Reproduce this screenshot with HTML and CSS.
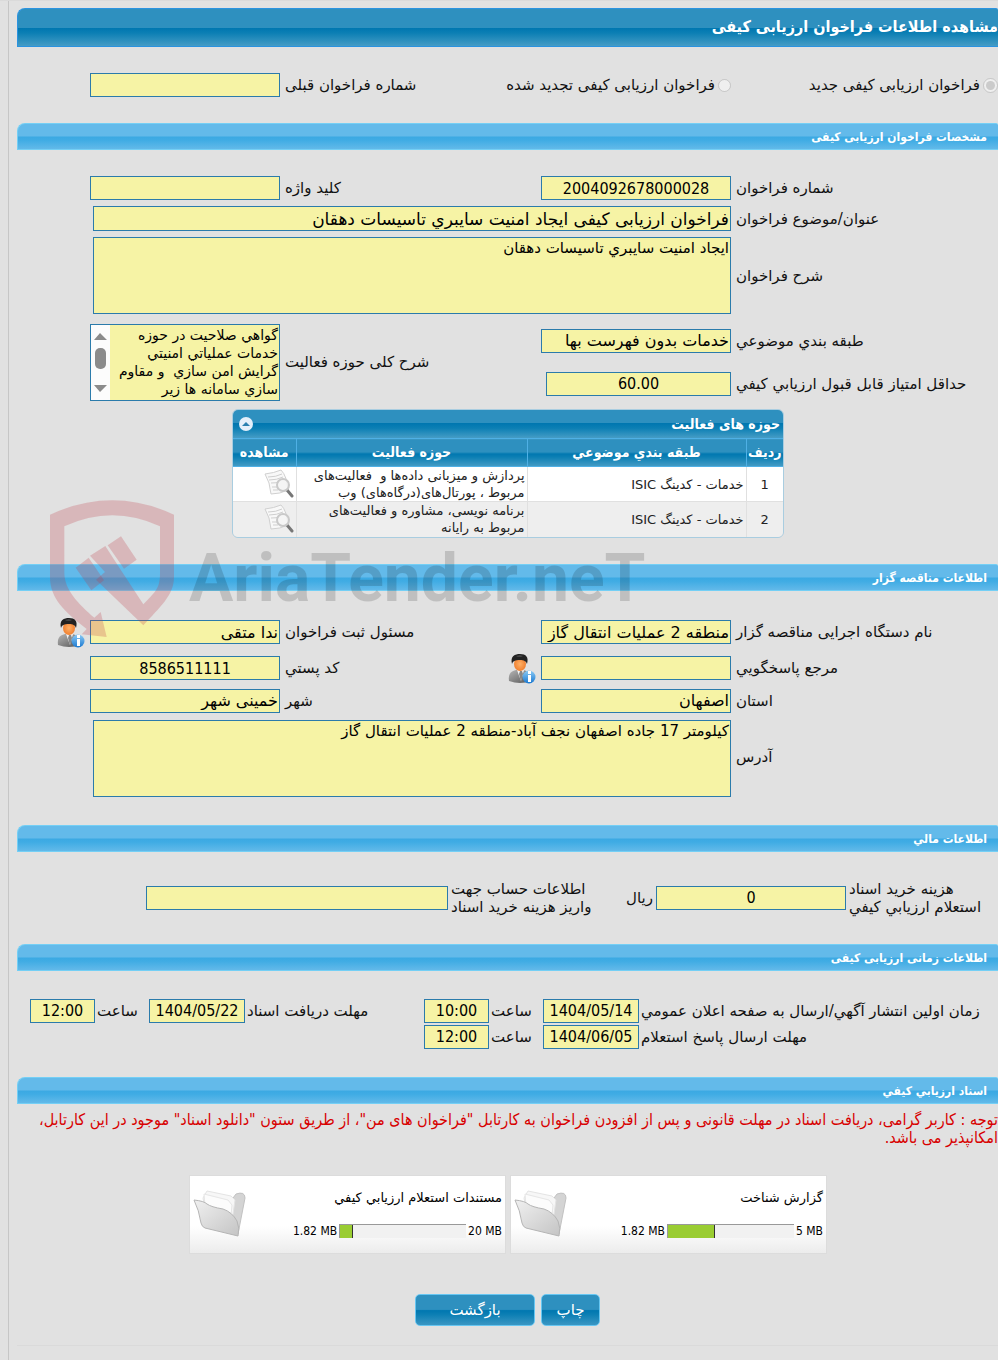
FILE: index.html
```html
<!DOCTYPE html>
<html lang="fa" dir="rtl">
<head>
  <meta charset="UTF-8" />
  <meta name="viewport" content="width=device-width, initial-scale=1.0" />
  <title>مشاهده اطلاعات فراخوان ارزیابی کیفی</title>
  <link rel="stylesheet" href="styles.css">
</head>
<body>
  <!-- shared icons -->
  <svg class="defs" aria-hidden="true">
    <defs>
      <linearGradient id="suit" x1="0" x2="1" y1="0" y2="1">
        <stop offset="0" stop-color="#b5b5b5"/><stop offset="1" stop-color="#555"/>
      </linearGradient>
      <radialGradient id="face"><stop offset="0" stop-color="#ffb066"/><stop offset="1" stop-color="#f08030"/></radialGradient>
      <linearGradient id="info" x1="0" x2="0" y1="0" y2="1">
        <stop offset="0" stop-color="#8ccbf5"/><stop offset="1" stop-color="#1a78d0"/>
      </linearGradient>
      <linearGradient id="flap" x1="0" x2="1" y1="0" y2="1">
        <stop offset="0" stop-color="#f0f0f0"/><stop offset="1" stop-color="#c4c4c4"/>
      </linearGradient>
    </defs>
    <symbol id="person" viewBox="0 0 28 31">
      <path d="M1 28C0 21 3 18 8 17h7c6 1 8 5 8 11q-11 4-22 0z" fill="url(#suit)"/>
      <path d="M9 17l4 11 3-11z" fill="#f4f4f4"/>
      <path d="M12 18l-1 3 2 8 2-8-1-3z" fill="#888"/>
      <ellipse cx="12" cy="11" rx="6" ry="7" fill="url(#face)"/>
      <path d="M4 11C2 3 7 1 12 1c6 0 9 3 7 10-1-3-3-4-7-4-5 0-7 1-8 4z" fill="#222"/>
      <path d="M8 3q4-1 7 0-4 1-7 0z" fill="#666"/>
      <circle cx="21" cy="24" r="6.500" fill="url(#info)"/>
      <path d="M20 22h3v7h-3zM20 18h3v3h-3z" fill="#fff"/>
    </symbol>
    <symbol id="view" viewBox="0 0 30 30">
      <path d="M1 5Q10 4 17 1q6 6 7 20-8 4-17 4-1-12-6-20z" fill="#f8f8f8" stroke="#d0d0d0"/>
      <path d="M4 8q8 0 14-3M5 11q8 0 14-3M7 14q6 0 8-1M8 18h5M9 21h5" fill="none" stroke="#cfcfcf"/>
      <path d="M23 21l5 6" stroke="#777" stroke-width="3" stroke-linecap="round"/>
      <circle cx="19" cy="16" r="6" fill="#f4f4f4" fill-opacity=".8" stroke="#c9c9c9" stroke-width="2"/>
    </symbol>
    <symbol id="folder" viewBox="0 0 54 48">
      <path d="M11 10l26 2 6-8q9-3 9 4l-7 36-26-9z" fill="#d4d4d4" stroke="#c2c2c2"/>
      <path d="M14 1l24 5 4 4-4 28-24-8-4-22z" fill="#f7f7f7" stroke="#e4e4e4"/>
      <path d="M11 4l24 6 4 5-2 22-24-8z" fill="#fcfcfc" stroke="#e6e6e6"/>
      <path d="M1 10q10 1 13 4 4 3 16 5 9 3 14 12 3 7 1 15l-33-8q-3-1-4-5Q6 20 1 10z" fill="url(#flap)" stroke="#b5b5b5"/>
    </symbol>
  </svg>

  <main class="panel">
    <h1 class="title-bar">مشاهده اطلاعات فراخوان ارزیابی کیفی</h1>

    <div class="form-grid top-row">
      <label class="radio"><input type="radio" name="kind" checked disabled>فراخوان ارزیابی کیفی جدید</label>
      <label class="radio"><input type="radio" name="kind" disabled>فراخوان ارزیابی کیفی تجدید شده</label>
      <label for="prev">شماره فراخوان قبلی</label>
      <input class="field" type="text" id="prev" readonly>
    </div>

    <h2 class="section-bar">مشخصات فراخوان ارزیابی کیفی</h2>
    <div class="form-grid first">
      <label for="number">شماره فراخوان</label>
      <input class="field num" type="text" id="number" value="2004092678000028" readonly>
      <label for="keyword">کلید واژه</label>
      <input class="field" type="text" id="keyword" readonly>
      <span></span>

      <label for="subject">عنوان/موضوع فراخوان</label>
      <input class="field wide" type="text" id="subject" value="فراخوان ارزیابی کیفی ایجاد امنیت سایبري تاسیسات دهقان" readonly>
      <span></span>

      <label for="desc">شرح فراخوان</label>
      <textarea class="field wide area" id="desc" readonly>ایجاد امنیت سایبري تاسیسات دهقان</textarea>
      <span></span>
    </div>

    <div class="form-grid activity">
      <label for="category">طبقه بندي موضوعي</label>
      <input class="field" type="text" id="category" value="خدمات بدون فهرست بها" readonly>
      <label class="tall" for="scope">شرح کلی حوزه فعالیت</label>
      <div class="scroll-box tall">
        <textarea id="scope" readonly>گواهي صلاحیت در حوزه
خدمات عملیاتي امنیتي
گرایش امن سازي  و مقاوم
سازي سامانه ها زیر</textarea>
        <svg class="scroll-track" viewBox="0 0 19 75" aria-hidden="true">
          <path d="M3 15l6-7 7 7zM3 60l6 7 7-7z" fill="#8b8b8b"/>
          <rect x="4" y="23" width="11" height="21" rx="5" fill="#8b8b8b"/>
        </svg>
      </div>
      <span class="tall"></span>

      <label for="score">حداقل امتیاز قابل قبول ارزیابي کیفي</label>
      <input class="field num score" type="text" id="score" value="60.00" readonly>
    </div>

    <div class="grid-box">
      <div class="grid-title">
        <span>حوزه های فعالیت</span>
        <button type="button" class="collapse" aria-label="بستن">
          <svg viewBox="0 0 16 16"><circle cx="8" cy="8" r="7" fill="#e4effa"/><path d="M4 10l4-4 4 4z" fill="#2a80b0"/></svg>
        </button>
      </div>
      <table>
        <thead>
          <tr><th class="c-row">ردیف</th><th class="c-cat">طبقه بندي موضوعي</th><th>حوزه فعالیت</th><th class="c-view">مشاهده</th></tr>
        </thead>
        <tbody>
          <tr>
            <td class="center">1</td>
            <td>خدمات - کدینگ ISIC</td>
            <td>پردازش و میزبانی داده‌ها و  فعالیت‌های<br>مربوط ، پورتال‌های(درگاه‌های) وب</td>
            <td class="view"><a href="#" aria-label="مشاهده"><svg width="30" height="30"><use href="#view"/></svg></a></td>
          </tr>
          <tr>
            <td class="center">2</td>
            <td>خدمات - کدینگ ISIC</td>
            <td>برنامه نویسی، مشاوره و فعالیت‌های<br>مربوط به رایانه</td>
            <td class="view"><a href="#" aria-label="مشاهده"><svg width="30" height="30"><use href="#view"/></svg></a></td>
          </tr>
        </tbody>
      </table>
    </div>

    <h2 class="section-bar">اطلاعات مناقصه گزار</h2>
    <div class="form-grid owner">
      <label for="org">نام دستگاه اجرایی مناقصه گزار</label>
      <input class="field" type="text" id="org" value="منطقه 2 عملیات انتقال گاز" readonly>
      <label for="clerk">مسئول ثبت فراخوان</label>
      <input class="field" type="text" id="clerk" value="ندا متقی" readonly>
      <a class="person" href="#" aria-label="اطلاعات مسئول"><svg width="28" height="31"><use href="#person"/></svg></a>

      <label for="contact">مرجع پاسخگویي</label>
      <input class="field" type="text" id="contact" readonly>
      <div class="with-icon">
        <a class="person" href="#" aria-label="اطلاعات مرجع"><svg width="28" height="31"><use href="#person"/></svg></a>
        <label for="postal">کد پستي</label>
      </div>
      <input class="field num" type="text" id="postal" value="8586511111" readonly>
      <span></span>

      <label for="province">استان</label>
      <input class="field" type="text" id="province" value="اصفهان" readonly>
      <label for="city">شهر</label>
      <input class="field" type="text" id="city" value="خمینی شهر" readonly>
      <span></span>

      <label for="address">آدرس</label>
      <textarea class="field wide area" id="address" readonly>کیلومتر 17 جاده اصفهان نجف آباد-منطقه 2 عملیات انتقال گاز</textarea>
      <span></span>
    </div>

    <h2 class="section-bar">اطلاعات مالي</h2>
    <div class="money-grid">
      <label for="cost">هزینه خرید اسناد<br>استعلام ارزیابي کیفي</label>
      <input class="field num" type="text" id="cost" value="0" readonly>
      <div class="with-icon">
        <span>ریال</span>
        <label class="account" for="account">اطلاعات حساب جهت<br>واریز هزینه خرید اسناد</label>
      </div>
      <input class="field" type="text" id="account" readonly>
    </div>

    <h2 class="section-bar">اطلاعات زمانی ارزیابی کیفی</h2>
    <div class="time-grid">
      <label for="pub-date">زمان اولین انتشار آگهي/ارسال به صفحه اعلان عمومي</label>
      <input class="field num" type="text" id="pub-date" value="1404/05/14" readonly>
      <label for="pub-time">ساعت</label>
      <input class="field num" type="text" id="pub-time" value="10:00" readonly>
      <label for="get-date">مهلت دریافت اسناد</label>
      <input class="field num" type="text" id="get-date" value="1404/05/22" readonly>
      <label for="get-time">ساعت</label>
      <input class="field num" type="text" id="get-time" value="12:00" readonly>
      <span></span>
      <label for="ans-date">مهلت ارسال پاسخ استعلام</label>
      <input class="field num" type="text" id="ans-date" value="1404/06/05" readonly>
      <label for="ans-time">ساعت</label>
      <input class="field num" type="text" id="ans-time" value="12:00" readonly>
    </div>

    <h2 class="section-bar">اسناد ارزیابي کیفي</h2>
    <p class="notice">توجه : کاربر گرامی، دریافت اسناد در مهلت قانونی و پس از افزودن فراخوان به کارتابل "فراخوان های من"، از طریق ستون "دانلود اسناد" موجود در این کارتابل، امکانپذیر می باشد.</p>

    <div class="files">
      <div class="file-card">
        <div class="file-info">
          <span>گزارش شناخت</span>
          <div class="usage"><bdi>5 MB</bdi><div class="bar"><div class="fill" style="width: 37%"></div></div><bdi>1.82 MB</bdi></div>
        </div>
        <svg width="54" height="48"><use href="#folder"/></svg>
      </div>
      <div class="file-card">
        <div class="file-info">
          <span>مستندات استعلام ارزیابي کیفي</span>
          <div class="usage"><bdi>20 MB</bdi><div class="bar"><div class="fill" style="width: 10%"></div></div><bdi>1.82 MB</bdi></div>
        </div>
        <svg width="54" height="48"><use href="#folder"/></svg>
      </div>
    </div>

    <div class="buttons">
      <button type="button" class="btn">چاپ</button>
      <button type="button" class="btn back">بازگشت</button>
    </div>

    <div class="watermark" dir="ltr">
      <svg width="125" height="138" viewBox="150 59 375 414" aria-hidden="true">
        <path d="M150 103Q337 17 522 103V290C522 345 480 380 430 435L288 298 315 275 270 226 316 197 362 268 430 372C465 335 480 325 480 280V138Q337 72 193 138V280C195 330 235 370 283 412L302 395 320 470 245 462 260 446C195 395 150 355 150 290Z"/>
        <path d="M227 262L266 232 312 300 274 330ZM323 195L363 168 410 238 372 265Z"/>
      </svg>
      <span>AriaTender.neT</span>
    </div>
  </main>
</body>
</html>
```
FILE: styles.css
```css
* {
  box-sizing: border-box;
}
body {
  margin: 0;
  padding-left: 8px;
  background: #e1e1e1;
  color: #111;
  font-family: "DejaVu Sans", sans-serif;
  font-size: 15px;
  line-height: 18px;
  border-top: 1px solid #dadada;
}
.defs {
  position: absolute;
  width: 0;
  height: 0;
}
.panel {
  position: relative;
  min-height: calc(100vh - 1px);
  padding: 7px 0 0 8px;
  border-left: 1px solid #c6c6c6;
}
h1, h2, p {
  margin: 0;
}
.title-bar, .section-bar, .grid-title, th, .num, .usage, .notice {
  font-family: "DejaVu Sans Condensed", "DejaVu Sans", sans-serif;
}
.title-bar {
  height: 39px;
  line-height: 36px;
  font-size: 16px;
  color: white;
  border: 1px solid #2a93e0;
  border-right: none;
  border-radius: 8px 2px 0 0;
  background: linear-gradient(#2e90bf 0 50%, #0077b0 52%, #0c7fb4 65%, #459cc5);
}
.section-bar {
  height: 27px;
  line-height: 27px;
  padding-right: 11px;
  font-size: 12px;
  color: white;
  border: 1px solid #74cff5;
  border-right: none;
  border-radius: 8px 2px 0 0;
  background: linear-gradient(#63baea 0 48%, #3ba9e3 52%, #40ace4 65%, #62b9e9);
}

/* forms */
.form-grid {
  display: grid;
  grid-template-columns: 262fr 190px 251fr 190px 68fr;
  gap: 6px 5px;
  align-items: center;
}
label {
  text-align: left;
  white-space: nowrap;
}
.field {
  width: 100%;
  height: 24px;
  margin: 0;
  padding: 0 1px;
  font-family: inherit;
  font-size: 16px;
  color: #000;
  background: #f6f3a5;
  border: 1px solid #2b7bab;
  outline: none;
}
.num {
  font-family: "DejaVu Sans Condensed", "DejaVu Sans", sans-serif;
  text-align: center;
  direction: ltr;
}
.wide {
  grid-column: span 3;
  width: auto;
  height: 25px;
  margin-left: 3px;
  font-size: 17px;
}
.area {
  height: 77px;
  font-size: 15px;
  line-height: 18px;
  resize: none;
  padding: 1px;
}
.top-row {
  padding: 26px 0;
}
.radio {
  display: flex;
  align-items: center;
  gap: 3px;
}
.radio input {
  width: 15px;
  height: 15px;
  margin: 0;
}
.first {
  padding-top: 26px;
}
.activity {
  grid-template-rows: 37px 37px;
  padding: 8px 0 7px;
}
.tall {
  grid-row: span 2;
}
.score {
  width: 185px;
}
.scroll-box {
  display: flex;
  height: 77px;
  border: 1px solid #2b7bab;
  background: #f6f3a5;
}
.scroll-box textarea {
  flex: 1;
  min-width: 0;
  height: 75px;
  padding: 1px;
  border: none;
  resize: none;
  overflow: hidden;
  white-space: pre;
  background: none;
  font-family: inherit;
  font-size: 14px;
  line-height: 18px;
  color: #000;
}
.scroll-track {
  width: 19px;
  height: 75px;
  background: #fcfcfc;
}
.with-icon {
  display: flex;
  justify-content: space-between;
  align-items: center;
}
.person {
  height: 31px;
}
.person svg {
  display: block;
}
.owner {
  gap: 5px;
  padding: 26px 0 28px;
}
.owner .area {
  margin-top: 2px;
}
.money-grid {
  display: grid;
  grid-template-columns: 149fr 190px 202fr 302px 126fr;
  gap: 3px;
  align-items: center;
  padding: 28px 0;
}
.time-grid {
  display: grid;
  grid-template-columns: 357fr 96px 50px 65px 175fr 96px 50px 65px 11fr;
  gap: 2px;
  align-items: center;
  padding: 28px 0;
}

/* activity table */
.grid-box {
  width: 552px;
  margin: 0 214px 26px auto;
  border: 1px solid #a9cde0;
  border-radius: 6px;
  overflow: hidden;
}
.grid-title {
  display: flex;
  justify-content: space-between;
  align-items: center;
  height: 28px;
  padding: 0 3px 0 5px;
  color: white;
  font-size: 14px;
  font-weight: bold;
  background: linear-gradient(#2e90bf 0 45%, #0077b0 48%, #0c7fb4 65%, #459cc5);
}
.collapse {
  width: 16px;
  height: 16px;
  padding: 0;
  border: none;
  background: none;
}
.collapse svg {
  display: block;
}
table {
  width: 100%;
  table-layout: fixed;
  border-collapse: collapse;
  font-size: 13px;
  line-height: 17px;
}
th {
  height: 28px;
  padding: 0;
  color: white;
  font-size: 14px;
  border: 1px solid #4fb0e5;
  border-width: 1px 0 1px 1px;
  background: linear-gradient(#2e90bf 0 48%, #0077b0 52%, #0c7fb4 65%, #459cc5);
}
th:last-child, td:last-child {
  border-left: none;
}
td {
  height: 35px;
  padding: 0 2px;
  color: #222;
  background: #fff;
  border-left: 1px solid #e0e0e0;
  white-space: pre;
}
tr:nth-child(2) td {
  background: #eee;
  border-top: 1px solid #e0e0e0;
}
.c-row {
  width: 37px;
}
.c-cat {
  width: 219px;
}
.c-view {
  width: 63px;
}
.center {
  text-align: center;
}
.view a {
  display: block;
  height: 30px;
}

/* documents */
.notice {
  padding-top: 7px;
  font-size: 16px;
  color: #d80000;
}
.files {
  display: flex;
  gap: 4px;
  margin-top: 28px;
  margin-right: 171px;
}
.file-card {
  display: flex;
  justify-content: space-between;
  align-items: center;
  width: 317px;
  height: 79px;
  padding: 0 3px;
  font-size: 13px;
  color: #000;
  border: 1px solid #dcdcdc;
  background: linear-gradient(#fff 65%, #ececec);
}
.file-info {
  display: flex;
  flex-direction: column;
  gap: 15px;
}
.usage {
  display: flex;
  align-items: center;
  gap: 2px;
  font-size: 12px;
}
.bar {
  width: 127px;
  height: 14px;
  direction: ltr;
  background: #f1f1f1;
  border-top: 1px solid #999;
  border-left: 1px solid #999;
}
.fill {
  height: 100%;
  background: #9acd32;
  border-right: 1px solid #333;
}
.buttons {
  display: flex;
  gap: 6px;
  padding: 40px 398px 19px 0;
  border-bottom: 1px solid #dadada;
}
.btn {
  width: 59px;
  height: 32px;
  padding: 0;
  color: white;
  font-family: inherit;
  font-size: 15px;
  border: 1px solid #66c6f2;
  border-radius: 5px;
  background: linear-gradient(#2e90bf 0 48%, #0077b0 52%, #0c7fb4 65%, #3a96c3);
}
.back {
  width: 120px;
}

.watermark {
  position: absolute;
  left: 41px;
  top: 499px;
  display: flex;
  align-items: center;
  gap: 14px;
  pointer-events: none;
}
.watermark svg {
  fill: rgba(190, 60, 70, 0.25);
}
.watermark span {
  padding-top: 20px;
  font: bold 66px/66px Roboto, "Liberation Sans", sans-serif;
  color: rgba(0, 0, 0, 0.15);
}
```
